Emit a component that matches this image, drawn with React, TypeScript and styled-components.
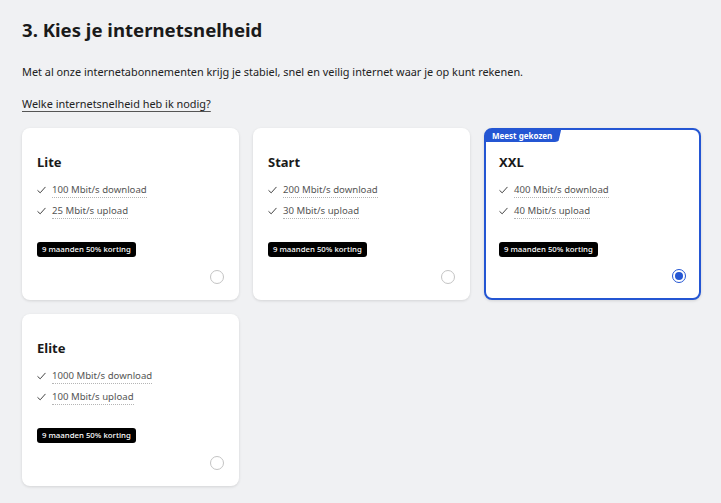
import React from "react";
import styled, { createGlobalStyle } from "styled-components";

const Global = createGlobalStyle`
  html, body { margin: 0; padding: 0; background: #f0f1f3; }
  body { font-family: "Noto Sans", "Open Sans", sans-serif; color: #1a1a1a; }
`;

const Page = styled.div`
  padding: 15px 20px 20px 22px;
  width: 679px;
`;

const Title = styled.h1`
  margin: 0;
  font-size: 18.6px;
  line-height: 30px;
  font-weight: 700;
  color: #1a1a1a;
`;

const Intro = styled.p`
  margin: 18px 0 0;
  font-size: 10.9px;
  line-height: 18px;
  color: #222;
`;

const HelpLink = styled.a`
  display: inline-block;
  margin-top: 14px;
  font-size: 10.9px;
  line-height: 18px;
  color: #222;
  text-decoration: underline;
  text-underline-offset: 3px;
  text-decoration-color: #555;
`;

const Grid = styled.div`
  display: grid;
  grid-template-columns: repeat(3, 1fr);
  gap: 14px 14px;
  margin-top: 15px;
`;

const Card = styled.div<{ $selected?: boolean }>`
  position: relative;
  background: #fff;
  border-radius: 8px;
  height: 172px;
  box-sizing: border-box;
  padding: ${(p) => (p.$selected ? "22px 13px 0" : "23px 14px 0")};
  border: ${(p) => (p.$selected ? "2px solid #2456d3" : "1px solid transparent")};
  box-shadow: 0 1px 3px rgba(0, 0, 0, 0.12);
  display: flex;
  flex-direction: column;
`;

const Ribbon = styled.div`
  position: absolute;
  top: -1px;
  left: -1px;
  background: #2456d3;
  color: #fff;
  font-size: 8px;
  font-weight: 700;
  line-height: 13px;
  padding: 0 9px 0 7px;
  border-radius: 7px 0 6px 0;
  clip-path: polygon(0 0, 100% 0, calc(100% - 3px) 100%, 0 100%);
`;

const PlanName = styled.h2`
  margin: 0;
  font-size: 13px;
  line-height: 20px;
  font-weight: 700;
  color: #1a1a1a;
`;

const Features = styled.ul`
  list-style: none;
  margin: 10px 0 0;
  padding: 0;
  display: flex;
  flex-direction: column;
  gap: 5px;
`;

const Feature = styled.li`
  display: flex;
  align-items: center;
  gap: 6px;
  font-size: 9.6px;
  line-height: 16px;
  color: #555;
`;

const FeatureText = styled.span`
  border-bottom: 1px dotted #b5b5b5;
  line-height: 15px;
`;

const Badge = styled.span`
  align-self: flex-start;
  margin-top: 23px;
  background: #000;
  color: #fff;
  font-size: 7.8px;
  font-weight: 500;
  line-height: 15px;
  padding: 0 5px;
  border-radius: 3px;
`;

const RadioRow = styled.div`
  margin-top: auto;
  margin-bottom: 15px;
  display: flex;
  justify-content: flex-end;
`;

const Radio = styled.span<{ $checked?: boolean }>`
  width: 14px;
  height: 14px;
  box-sizing: border-box;
  border-radius: 50%;
  border: 1px solid ${(p) => (p.$checked ? "#2456d3" : "#c4c4c4")};
  display: flex;
  align-items: center;
  justify-content: center;
  &::after {
    content: "";
    width: 8px;
    height: 8px;
    border-radius: 50%;
    background: ${(p) => (p.$checked ? "#2456d3" : "transparent")};
  }
`;

const Check = () => (
  <svg width="9" height="8" viewBox="0 0 9 8" fill="none">
    <path d="M0.8 4.6 L3.2 6.8 L8.2 1.2" stroke="#444" strokeWidth="1" strokeLinecap="round" strokeLinejoin="round" />
  </svg>
);

type Plan = { name: string; down: string; up: string; selected?: boolean; popular?: boolean };

const plans: Plan[] = [
  { name: "Lite", down: "100 Mbit/s download", up: "25 Mbit/s upload" },
  { name: "Start", down: "200 Mbit/s download", up: "30 Mbit/s upload" },
  { name: "XXL", down: "400 Mbit/s download", up: "40 Mbit/s upload", selected: true, popular: true },
  { name: "Elite", down: "1000 Mbit/s download", up: "100 Mbit/s upload" },
];

export default function App() {
  return (
    <>
      <Global />
      <Page>
        <Title>3. Kies je internetsnelheid</Title>
        <Intro>Met al onze internetabonnementen krijg je stabiel, snel en veilig internet waar je op kunt rekenen.</Intro>
        <HelpLink href="#">Welke internetsnelheid heb ik nodig?</HelpLink>
        <Grid>
          {plans.map((p) => (
            <Card key={p.name} $selected={p.selected}>
              {p.popular && <Ribbon>Meest gekozen</Ribbon>}
              <PlanName>{p.name}</PlanName>
              <Features>
                <Feature>
                  <Check />
                  <FeatureText>{p.down}</FeatureText>
                </Feature>
                <Feature>
                  <Check />
                  <FeatureText>{p.up}</FeatureText>
                </Feature>
              </Features>
              <Badge>9 maanden 50% korting</Badge>
              <RadioRow>
                <Radio $checked={p.selected} />
              </RadioRow>
            </Card>
          ))}
        </Grid>
      </Page>
    </>
  );
}
